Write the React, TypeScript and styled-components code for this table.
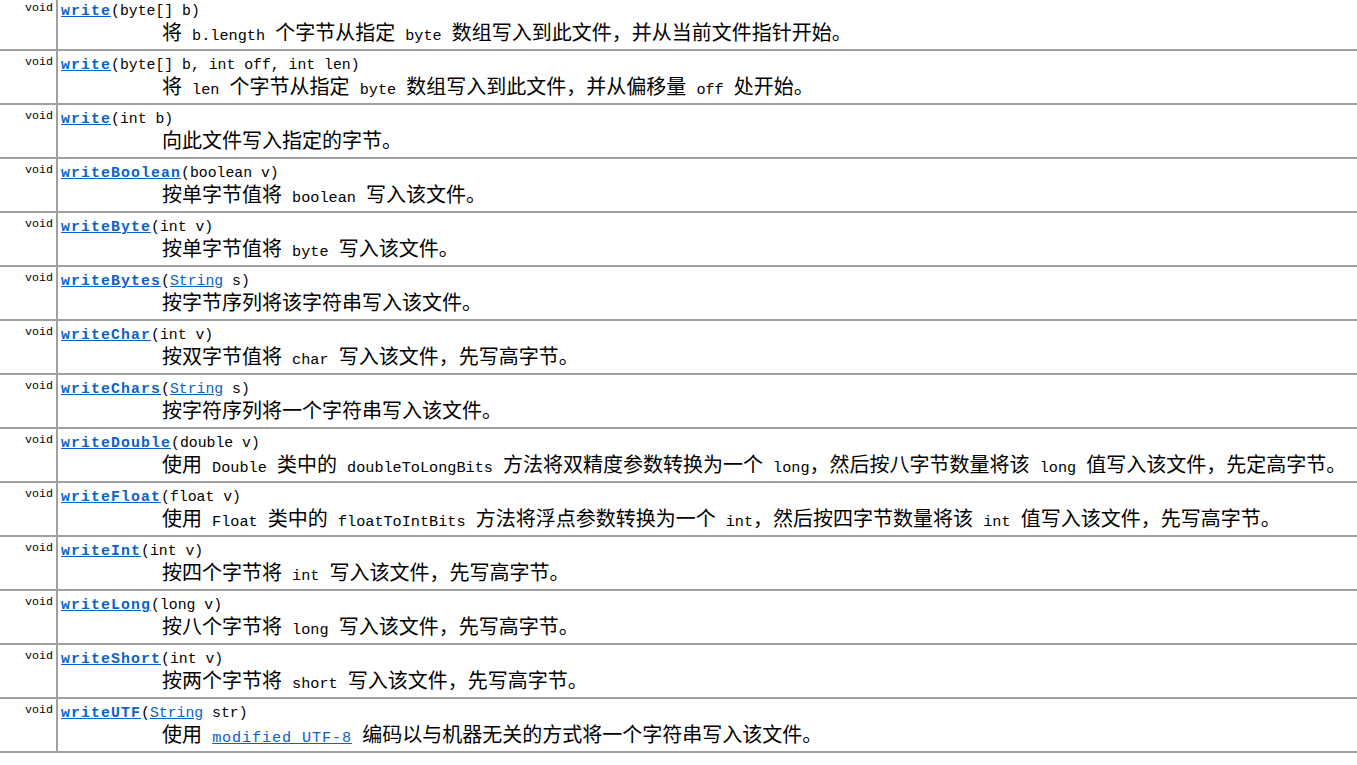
import React from "react";
import styled, { createGlobalStyle } from "styled-components";

const GlobalStyle = createGlobalStyle`
  html, body { margin: 0; padding: 0; background: #ffffff; }
  body {
    font-family: "Noto Sans CJK SC", sans-serif;
    color: #000000;
    overflow: hidden;
  }
  #root { width: 1357px; height: 765px; overflow: hidden; }
`;

const Table = styled.div`
  width: 1357px;
  margin-top: -5px;
  border-bottom: 2px solid #a0a0a0;
`;

const Row = styled.div`
  display: grid;
  grid-template-columns: 58px 1fr;
  height: 54px;
  box-sizing: border-box;
  border-top: 2px solid #a0a0a0;
`;

const TypeCell = styled.div`
  border-right: 2px solid #a0a0a0;
  padding: 3px 3px 0 0;
  text-align: right;
  font-family: "Liberation Mono", monospace;
  font-size: 11.67px;
  line-height: 16px;
`;

const MainCell = styled.div`
  padding: 3px 0 0 3px;
  overflow: hidden;
`;

const Signature = styled.div`
  font-family: "Liberation Mono", monospace;
  font-size: 14.8px;
  line-height: 22px;
  white-space: pre;
`;

const MethodLink = styled.a`
  font-weight: bold;
  letter-spacing: 1.12px;
  color: #0b62c4;
  text-decoration: underline;
`;

const TypeLink = styled.a`
  color: #0b62c4;
  text-decoration: underline;
`;

const Desc = styled.div`
  padding-left: 101px;
  font-family: "Noto Sans CJK SC", sans-serif;
  font-size: 20px;
  line-height: 20px;
  white-space: pre;
`;

const Code = styled.span`
  font-family: "Liberation Mono", monospace;
  font-size: 15.2px;
  line-height: 1;
  word-spacing: 1px;
`;

const TextLink = styled.a`
  font-family: "Liberation Mono", monospace;
  font-size: 15.2px;
  line-height: 1;
  letter-spacing: 0.88px;
  color: #0b62c4;
  text-decoration: underline;
`;

type Method = { type: string; name: string; params: string; desc: string };

const methods: Method[] = [
  { type: "void", name: "write", params: "(byte[] b)", desc: "将 b.length 个字节从指定 byte 数组写入到此文件，并从当前文件指针开始。" },
  { type: "void", name: "write", params: "(byte[] b, int off, int len)", desc: "将 len 个字节从指定 byte 数组写入到此文件，并从偏移量 off 处开始。" },
  { type: "void", name: "write", params: "(int b)", desc: "向此文件写入指定的字节。" },
  { type: "void", name: "writeBoolean", params: "(boolean v)", desc: "按单字节值将 boolean 写入该文件。" },
  { type: "void", name: "writeByte", params: "(int v)", desc: "按单字节值将 byte 写入该文件。" },
  { type: "void", name: "writeBytes", params: "([[String]] s)", desc: "按字节序列将该字符串写入该文件。" },
  { type: "void", name: "writeChar", params: "(int v)", desc: "按双字节值将 char 写入该文件，先写高字节。" },
  { type: "void", name: "writeChars", params: "([[String]] s)", desc: "按字符序列将一个字符串写入该文件。" },
  { type: "void", name: "writeDouble", params: "(double v)", desc: "使用 Double 类中的 doubleToLongBits 方法将双精度参数转换为一个 long，然后按八字节数量将该 long 值写入该文件，先定高字节。" },
  { type: "void", name: "writeFloat", params: "(float v)", desc: "使用 Float 类中的 floatToIntBits 方法将浮点参数转换为一个 int，然后按四字节数量将该 int 值写入该文件，先写高字节。" },
  { type: "void", name: "writeInt", params: "(int v)", desc: "按四个字节将 int 写入该文件，先写高字节。" },
  { type: "void", name: "writeLong", params: "(long v)", desc: "按八个字节将 long 写入该文件，先写高字节。" },
  { type: "void", name: "writeShort", params: "(int v)", desc: "按两个字节将 short 写入该文件，先写高字节。" },
  { type: "void", name: "writeUTF", params: "([[String]] str)", desc: "使用 [[modified UTF-8]] 编码以与机器无关的方式将一个字符串写入该文件。" },
];

function renderParams(text: string) {
  const parts = text.split(/\[\[(.+?)\]\]/);
  return parts.map((p, i) =>
    i % 2 === 1 ? (
      <TypeLink key={i} href="#">
        {p}
      </TypeLink>
    ) : (
      <React.Fragment key={i}>{p}</React.Fragment>
    )
  );
}

function renderDesc(text: string) {
  const parts = text.split(/\[\[(.+?)\]\]/);
  const out: React.ReactNode[] = [];
  parts.forEach((p, i) => {
    if (i % 2 === 1) {
      out.push(
        <TextLink key={`l${i}`} href="#">
          {p}
        </TextLink>
      );
      return;
    }
    const segs = p.split(/([\x00-\x7F]+)/);
    segs.forEach((s, j) => {
      if (!s) return;
      if (j % 2 === 1) out.push(<Code key={`${i}-${j}`}>{s}</Code>);
      else out.push(<React.Fragment key={`${i}-${j}`}>{s}</React.Fragment>);
    });
  });
  return out;
}

export default function App() {
  return (
    <>
      <GlobalStyle />
      <Table>
        {methods.map((m, idx) => (
          <Row key={idx}>
            <TypeCell>{m.type}</TypeCell>
            <MainCell>
              <Signature>
                <MethodLink href="#">{m.name}</MethodLink>
                {renderParams(m.params)}
              </Signature>
              <Desc>{renderDesc(m.desc)}</Desc>
            </MainCell>
          </Row>
        ))}
      </Table>
    </>
  );
}
